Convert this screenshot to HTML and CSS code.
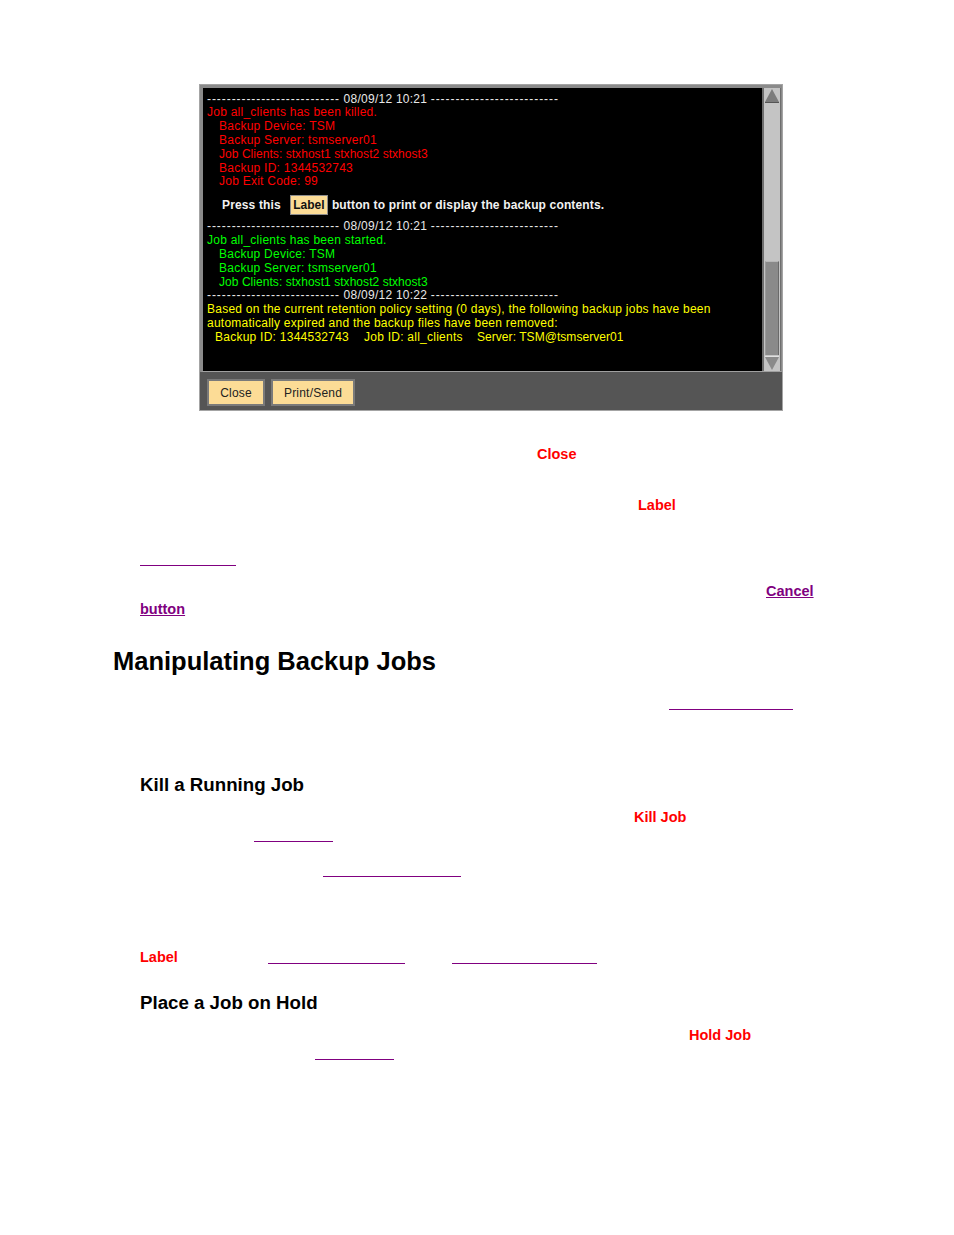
FILE: index.html
```html
<!DOCTYPE html>
<html>
<head>
<meta charset="utf-8">
<title>Manipulating Backup Jobs</title>
<link rel="stylesheet" href="styles.css">
</head>
<body>
<div class="page">
  <div class="win">
    <div class="pane">
      <div class="term">
        <div class="ln dash"><span class="dd">---------------------------</span> 08/09/12 10:21 <span class="dd">--------------------------</span></div>
        <div class="ln red">Job all_clients has been killed.</div>
        <div class="ln red ind">Backup Device: TSM</div>
        <div class="ln red ind">Backup Server: tsmserver01</div>
        <div class="ln red ind tight">Job Clients: stxhost1 stxhost2 stxhost3</div>
        <div class="ln red ind">Backup ID: 1344532743</div>
        <div class="ln red ind">Job Exit Code: 99</div>
        <div class="press">
          <span>Press this</span>
          <span class="lblbtn">Label</span>
          <span class="after">button to print or display the backup contents.</span>
        </div>
        <div class="ln dash"><span class="dd">---------------------------</span> 08/09/12 10:21 <span class="dd">--------------------------</span></div>
        <div class="ln green">Job all_clients has been started.</div>
        <div class="ln green ind">Backup Device: TSM</div>
        <div class="ln green ind">Backup Server: tsmserver01</div>
        <div class="ln green ind tight">Job Clients: stxhost1 stxhost2 stxhost3</div>
        <div class="ln dash"><span class="dd">---------------------------</span> 08/09/12 10:22 <span class="dd">--------------------------</span></div>
        <div class="ln yellow">Based on the current retention policy setting (0 days), the following backup jobs have been</div>
        <div class="ln yellow">automatically expired and the backup files have been removed:</div>
        <div class="ln yellow ind2"><span class="c1">Backup ID: 1344532743</span><span class="c2">Job ID: all_clients</span><span class="srv">Server: TSM@tsmserver01</span></div>
      </div>
      <div class="sbar">
        <div class="arrow">
          <svg width="16" height="16" viewBox="0 0 16 16"><polygon points="8,1 15,14 1,14" fill="#7c7c7c"/><line x1="1" y1="14.5" x2="15" y2="14.5" stroke="#555" stroke-width="1"/></svg>
        </div>
        <div class="track">
          <div class="spacer"></div>
          <div class="thumb"></div>
        </div>
        <div class="arrow">
          <svg width="16" height="16" viewBox="0 0 16 16"><polygon points="1,2 15,2 8,15" fill="#8a8a8a"/><line x1="1" y1="1.5" x2="15" y2="1.5" stroke="#e0e0e0" stroke-width="1"/></svg>
        </div>
      </div>
    </div>
    <div class="btnbar">
      <span class="btn b-close">Close</span>
      <span class="btn b-print">Print/Send</span>
    </div>
  </div>

  <div class="row r1"><span class="kw x537">Close</span></div>
  <div class="row r2"><span class="kw x638">Label</span></div>
  <div class="row r3"><span class="ul u140a"></span></div>
  <div class="row r4"><a class="lk x766">Cancel</a></div>
  <div class="row r5"><a class="lk x140">button</a></div>

  <h1 class="h1">Manipulating Backup Jobs</h1>
  <div class="urow ur1"><span class="ul2 u669"></span></div>

  <h2 class="h2 h2a">Kill a Running Job</h2>
  <div class="row r6"><span class="kw x634">Kill Job</span></div>
  <div class="urow ur2"><span class="ul2 u254"></span></div>
  <div class="urow ur3"><span class="ul2 u323"></span></div>
  <div class="row r7"><span class="kw x140">Label</span><span class="ul u268"></span><span class="ul u452"></span></div>

  <h2 class="h2 h2b">Place a Job on Hold</h2>
  <div class="row r8"><span class="kw x689">Hold Job</span></div>
  <div class="urow ur4"><span class="ul2 u315"></span></div>
</div>
</body>
</html>
```

FILE: styles.css
```css
html, body {
  margin: 0;
  padding: 0;
  background: #ffffff;
}
.page {
  width: 954px;
  height: 1235px;
  overflow: hidden;
  font-family: "Liberation Sans", Arial, sans-serif;
}

/* window */
.win {
  margin: 84px 0 0 199px;
  width: 584px;
  height: 327px;
  box-sizing: border-box;
  border: 1px solid #a4a4a4;
  background: #555555;
}
.pane {
  display: flex;
  height: 287px;
  box-sizing: border-box;
  border-top: 3px solid #8a8a8a;
  border-left: 3px solid #8a8a8a;
  border-right: 1px solid #8a8a8a;
  border-bottom: 1px solid #a0a0a0;
}
.term {
  width: 559px;
  background: #000;
  box-sizing: border-box;
  padding: 4.5px 0 0 4px;
  font-size: 12px;
  letter-spacing: 0.25px;
  color: #fff;
}
.ln {
  height: 13.83px;
  line-height: 13.83px;
  white-space: pre;
}
.ind { padding-left: 12px; }
.ind2 { padding-left: 8px; }
.tight { letter-spacing: 0.05px; }
.srv { letter-spacing: 0.05px; }
.dash { color: #e8e8e8; }
.dd { letter-spacing: 0.93px; }
.red { color: #ff0000; }
.green { color: #00ff00; }
.yellow { color: #ffff00; }
.c1 { display: inline-block; width: 149px; }
.c2 { display: inline-block; width: 113px; }

.press {
  height: 31px;
  display: flex;
  align-items: center;
  padding-left: 15px;
  font-weight: bold;
  letter-spacing: 0.15px;
  color: #f2f2f2;
  white-space: pre;
}
.lblbtn {
  margin-left: 9px;
  width: 38px;
  height: 20px;
  box-sizing: border-box;
  border: 1px solid #8c8c8c;
  background: #fcdc96;
  color: #111;
  letter-spacing: 0;
  display: flex;
  align-items: center;
  justify-content: center;
}
.after { margin-left: 4px; }

/* scrollbar */
.sbar {
  width: 19px;
  box-sizing: border-box;
  border-left: 2px solid #6e6e6e;
  border-right: 1px solid #6e6e6e;
  background: #c4c4c4;
  display: flex;
  flex-direction: column;
}
.arrow {
  height: 16px;
  display: flex;
  justify-content: center;
}
.track {
  flex: 1;
  display: flex;
  flex-direction: column;
  padding: 0 1px;
}
.spacer { flex: 1; }
.thumb {
  height: 94px;
  box-sizing: border-box;
  background: #8a8a8a;
  border-top: 1px solid #b8b8b8;
  border-left: 1px solid #9a9a9a;
  border-right: 1px solid #6a6a6a;
}

/* button bar */
.btnbar {
  display: flex;
  gap: 6px;
  padding: 7px 0 0 7px;
}
.btn {
  height: 27px;
  box-sizing: border-box;
  border: 2px solid #7a7a7a;
  background: #fcdc96;
  color: #222;
  font-size: 12px;
  letter-spacing: 0.2px;
  display: flex;
  align-items: center;
  justify-content: center;
}
.b-close { width: 58px; }
.b-print { width: 84px; }

/* document rows */
.row {
  height: 18px;
  line-height: 18px;
  white-space: nowrap;
  font-size: 14.5px;
  font-weight: bold;
}
.urow {
  height: 10px;
}
.kw { color: #ff0000; display: inline-block; vertical-align: top; }
.lk { color: #800080; text-decoration: underline; display: inline-block; vertical-align: top; }
.ul {
  display: inline-block;
  vertical-align: top;
  height: 15px;
  border-bottom: 1px solid #800080;
}
.ul2 {
  display: inline-block;
  vertical-align: top;
  height: 9px;
  border-bottom: 1px solid #800080;
}
.r1 { margin-top: 34px; }
.r2 { margin-top: 33px; }
.r3 { margin-top: 33px; }
.r4 { margin-top: 17px; }
.r5 { margin-top: 0; }
.r6 { margin-top: 12px; }
.r7 { margin-top: 71px; }
.r8 { margin-top: 12px; }
.r3 .ul { height: 18px; }

.x537 { margin-left: 537px; }
.x638 { margin-left: 638px; }
.x766 { margin-left: 766px; }
.x140 { margin-left: 140px; }
.x634 { margin-left: 634px; }
.x689 { margin-left: 689px; }

.u140a { margin-left: 140px; width: 96px; }
.u669 { margin-left: 669px; width: 124px; }
.u254 { margin-left: 254px; width: 79px; }
.u323 { margin-left: 323px; width: 138px; }
.u268 { margin-left: 90px; width: 137px; }
.u452 { margin-left: 47px; width: 145px; }
.u315 { margin-left: 315px; width: 79px; }

.ur1 { margin-top: 24px; }
.ur2 { margin-top: 6px; }
.ur3 { margin-top: 25px; }
.ur4 { margin-top: 6px; }

.h1 {
  margin: 28px 0 0 113px;
  font-size: 25.5px;
  line-height: 30px;
  height: 30px;
  font-weight: bold;
  color: #000;
}
.h2 {
  margin: 0 0 0 140px;
  font-size: 18.7px;
  line-height: 22px;
  height: 22px;
  font-weight: bold;
  color: #000;
}
.h2a { margin-top: 64px; }
.h2b { margin-top: 26px; }
```
